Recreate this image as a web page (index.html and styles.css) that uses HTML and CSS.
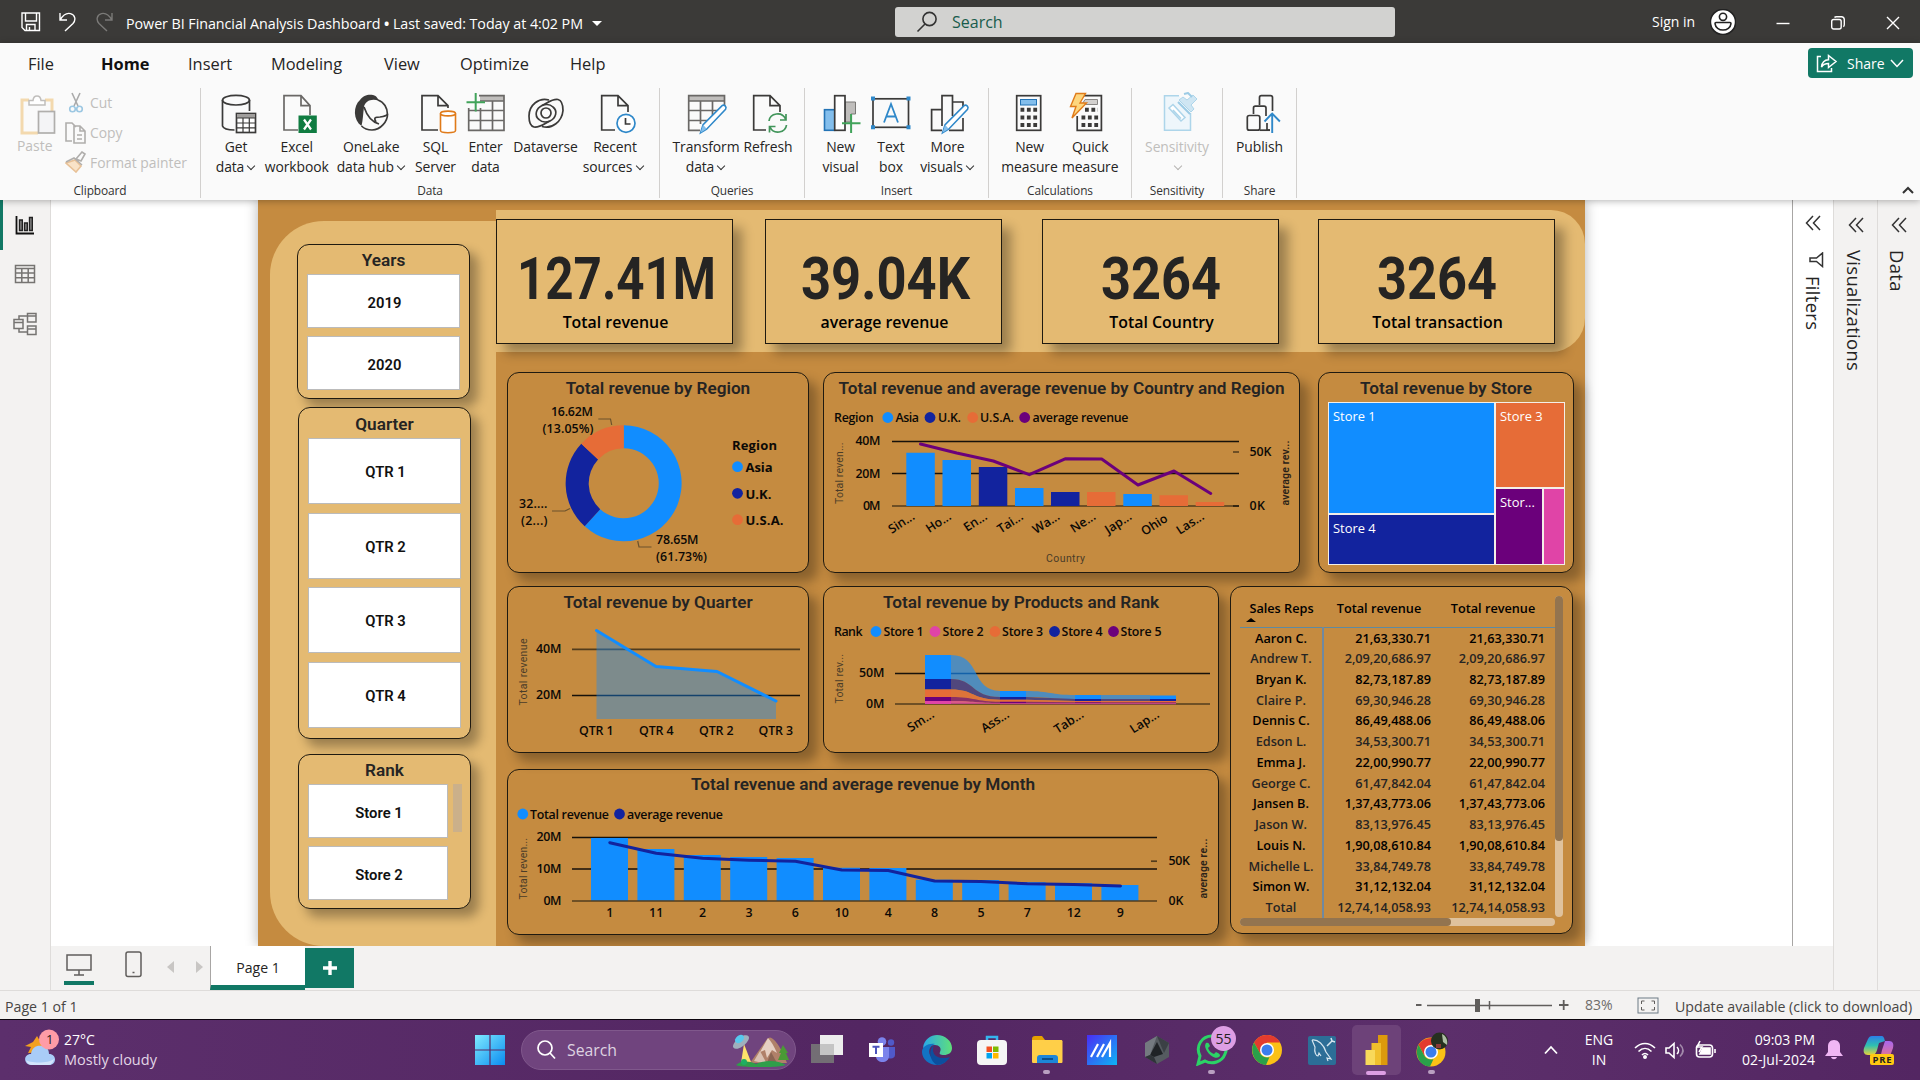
FILE: index.html
```html
<!DOCTYPE html>
<html lang="en">
<head>
<meta charset="utf-8">
<title>Power BI Financial Analysis Dashboard</title>
<link rel="stylesheet" href="styles.css">
</head>
<body>
<header class="titlebar">
  <div class="quick">
    <svg class="q-save" width="20" height="20" viewBox="0 0 20 20"><path d="M1 1h17.500v17.500H4L1 15.500zM4.500 1v8h11V1M5.500 18.500v-6h8.500v6M8.500 18v-3" /></svg>
    <svg class="q-undo" width="18" height="20" viewBox="0 0 18 20"><path d="M1 1v7h7M1.200 7.800C4 3 8 .8 11.500 1.600c5 1.400 5.500 6.500 2.500 9.900L6 19"/></svg>
    <svg class="q-redo" width="18" height="20" viewBox="0 0 18 20"><path d="M17 1v7h-7M16.800 7.800C14 3 10 .8 6.500 1.600c-5 1.400-5.500 6.500-2.500 9.900L12 19"/></svg>
  </div>
  <div class="doc-title">Power BI Financial Analysis Dashboard <b>•</b> Last saved: Today at 4:02 PM</div>
  <i class="caret-down"></i>
  <div class="top-search">
    <svg width="22" height="22" viewBox="0 0 22 22"><circle cx="13.500" cy="8" r="6.600"/><path d="M9 13L1.500 20.500"/></svg>
    <span>Search</span>
  </div>
  <span class="signin">Sign in</span>
  <svg class="avatar" width="26" height="26" viewBox="0 0 26 26"><circle cx="13" cy="13" r="12.600" fill="#fff"/><circle cx="13" cy="7.800" r="3.600"/><path d="M6 13.500h14c.8 0 1 .6 1 1.200-.4 3.800-4 6.300-8 6.300s-7.600-2.500-8-6.300c0-.6.200-1.200 1-1.200z"/></svg>
  <div class="win-ctl">
    <svg width="14" height="14" viewBox="0 0 14 14"><path d="M.5 7.500h13"/></svg>
    <svg width="14" height="14" viewBox="0 0 14 14"><rect x=".7" y="3.500" width="9.500" height="9.500" rx="2"/><path d="M3.500 1.500C4 .8 4.500.7 5.500.7h5a3 3 0 0 1 2.800 2.800v5c0 1-.2 1.800-1 2.200"/></svg>
    <svg width="14" height="14" viewBox="0 0 14 14"><path d="M1 1l12 12M13 1L1 13"/></svg>
  </div>
</header>

<section class="ribbon">
  <nav class="menu">
    <a class="m1">File</a><a class="m2">Home</a><a class="m3">Insert</a><a class="m4">Modeling</a><a class="m5">View</a><a class="m6">Optimize</a><a class="m7">Help</a>
    <button class="share"><svg width="22" height="20" viewBox="0 0 22 20"><path d="M5 3.500H1.500v15h14V15M5.500 14c.5-4.500 3-7 7-7.200V2.500L20 8.500l-7.500 6V10.500C9.500 10.500 7 11.500 5.500 14z"/></svg><span>Share</span><svg width="14" height="9" viewBox="0 0 14 9"><path d="M1 1l6 6.500L13 1"/></svg></button>
  </nav>
  <div class="groups">
    <div class="group g-clip">
      <div class="clip">
        <div class="paste">
          <svg width="38" height="40" viewBox="0 0 38 40"><path d="M9 5H2v33h16M25 5h7v12" fill="none" stroke="#f3d9ae" stroke-width="3"/><path d="M9 10V5.500h4c.5-6 7.500-6 8 0h4V10z" fill="#fff" stroke="#c0bebc" stroke-width="1.500"/><rect x="18.500" y="16.500" width="16" height="21.500" fill="#f4f4f6" stroke="#b0aeac" stroke-width="1.700"/></svg>
          <span>Paste</span>
        </div>
        <div class="clip-list">
          <div><svg width="22" height="22" viewBox="0 0 22 22"><path d="M7 1l6 13M15 1L9 14" stroke="#aaa"/><circle cx="7.500" cy="17" r="2.800" stroke="#9cc7e2"/><circle cx="14.500" cy="17" r="2.800" stroke="#9cc7e2"/></svg>Cut</div>
          <div><svg width="22" height="22" viewBox="0 0 22 22"><path d="M7 19H1V1h6l4 4M9 4h6l5 5v12H9zM15 4v5h5M12 13h5M12 17h5" stroke="#b0aeac"/></svg>Copy</div>
          <div><svg width="22" height="22" viewBox="0 0 22 22"><path d="M1 12l9-3 6 6-5 6z" fill="#f9e3c8" stroke="#e8c197"/><path d="M1 11l8-4 8 7M11 8l6-7 3 2-4 7z" stroke="#b0aeac"/></svg>Format painter</div>
        </div>
      </div>
      <div class="g-name">Clipboard</div>
    </div>
    <div class="group g-data">
      <div class="btns">
        <div class="btn w61"><svg width="48" height="44" viewBox="0 0 48 44"><path class="d" d="M37.500 19V8M10.500 8v26c1 3 6 4 12 4"/><ellipse class="d" cx="24" cy="8.200" rx="13.500" ry="4.800"/><rect class="d w" x="24.500" y="21.500" width="19" height="19"/><path d="M25 22h18v4H25z" fill="#a09e9c"/><path class="d t" d="M24.500 26h19M24.500 31h19M24.500 35.800h19M31 26v14.500M37.300 26v14.500"/></svg><span>Get<br>data<i></i></span></div>
        <div class="btn w605"><svg width="48" height="44" viewBox="0 0 48 44"><path class="g" d="M25 38H11V3.700h17l9 10V23M28 3.700v10h9"/><path d="M25.500 23.500h18.300V41H25.500z" fill="#107c41"/><path d="M31 27.500l7 10M38 27.500l-7 10" stroke="#fff" stroke-width="2.200"/></svg><span>Excel<br>workbook</span></div>
        <div class="btn w885"><svg width="48" height="44" viewBox="0 0 48 44"><path class="d" d="M31 8c6 2 9.500 8 9.500 14.500S34 38 25 38c-5 0-8-1.500-10.500-4"/><path d="M14.500 34C6 28 6 14 13 8c3-5 9-6 13-5 4 1 5 4 6 6-7-3-14 0-15 6-1 7-1 13-2.500 19z" fill="#3b3a39"/><path class="d" d="M17 15c3 9 8 15 15 17M29 30c-3-5 0-5 4-5 4-.5 7-1 7.500-3"/></svg><span>OneLake<br>data hub<i></i></span></div>
        <div class="btn w40"><svg width="48" height="44" viewBox="0 0 48 44"><path class="d" d="M26 38H10V3.700h16l10 10V16M26 3.700v10h10"/><path d="M28.500 21.500v17c0 3 15 3 15 0v-17" fill="#fff" stroke="#e07b1a" stroke-width="1.600"/><ellipse cx="36" cy="21.500" rx="7.500" ry="2.400" fill="#fff" stroke="#e07b1a" stroke-width="1.600"/></svg><span>SQL<br>Server</span></div>
        <div class="btn w60"><svg width="48" height="44" viewBox="0 0 48 44"><path d="M18 4h24v5H18z" fill="#c0bebc"/><path class="g" d="M17 3.700h25v34.600H6.700V16M18 9h24M6.700 18.500H42M6.700 28.500H42M18.500 16v22M30.500 9v29"/><path d="M13.700 1v18.500M4.500 10.300h18.500" stroke="#41a35a" stroke-width="2"/></svg><span>Enter<br>data</span></div>
        <div class="btn w60"><svg width="48" height="44" viewBox="0 0 48 44"><path class="d" d="M27 8C17 5 7 13 7 24c0 6 1 10 5 11 6 1 11-4 16-6M20 34.500c10 3 20-5 21-16 0-6-1-10-5-11-6-1-11 4-16 6"/><circle class="d" cx="24" cy="21" r="5"/><path class="d" d="M20 13.500c-6 3-8 10-3 14 3 3 7 3 11 1.500M28 29c6-3 8-10 3-14-3-3-7-3-11-1.500"/></svg><span>Dataverse</span></div>
        <div class="btn w79"><svg width="48" height="44" viewBox="0 0 48 44"><path class="d" d="M24 38H10.700V3.700H27l10 10V20M27 3.700v10h10"/><circle cx="35" cy="31.300" r="9" fill="#fff" stroke="#2f88c9" stroke-width="1.700"/><path class="d" d="M34.500 26v6h5"/></svg><span>Recent<br>sources<i class="sp"></i></span></div>
      </div>
      <div class="g-name">Data</div>
    </div>
    <div class="group g-quer">
      <div class="btns">
        <div class="btn w80"><svg width="48" height="44" viewBox="0 0 48 44"><path d="M7 4h35v5H7z" fill="#c0bebc"/><path class="g" d="M42.500 14V3.700H6.700v34.600H18M6.700 9h36M6.700 18.500H36M6.700 28.500H25M18.500 9v23M30.500 9v14"/><path d="M18.600 40.700l2.500-8 19-19c2-1.500 5 1 3.500 3.500l-19 20z" fill="#fff" stroke="#2f88c9" stroke-width="1.600"/><path d="M18.600 40.700l2.500-8 3.500 4z" fill="#83beec"/></svg><span>Transform<br>data<i></i></span></div>
        <div class="btn w44"><svg width="48" height="44" viewBox="0 0 48 44"><path class="d" d="M22 38H9.700V3.700H26l10 10V20M26 3.700v10h10"/><path d="M25 29c1-8 13-10 16.500-2M42 22v6h-6M42.500 33c-1 8-13 10-16.500 2M25.500 40.500v-6h6" fill="none" stroke="#41955a" stroke-width="1.700"/></svg><span>Refresh</span></div>
      </div>
      <div class="g-name">Queries</div>
    </div>
    <div class="group g-ins">
      <div class="btns">
        <div class="btn w50"><svg width="48" height="44" viewBox="0 0 48 44"><path d="M28 10h10.500v12H34v8h-6z" fill="#c0bebc" stroke="#7a7876"/><rect x="7.500" y="17.700" width="10.300" height="20.600" fill="#83beec" stroke="#2373b5" stroke-width="1.600"/><rect class="d w" x="17.700" y="3.700" width="10.300" height="34.600"/><path d="M34.100 22v19M25 31.300h18.500" stroke="#41a35a" stroke-width="2"/></svg><span>New<br>visual</span></div>
        <div class="btn w51"><svg width="48" height="44" viewBox="0 0 48 44"><rect class="d" x="6" y="6.800" width="35.500" height="28.500"/><path d="M4 4.500h4v4H4zM39.500 4.500h4v4h-4zM4 33.200h4v4H4zM39.500 33.200h4v4h-4z" fill="#2f88c9"/><path d="M17 30.500l7-18.500 7 18.500M19.500 24.500h9.200" fill="none" stroke="#2f88c9" stroke-width="1.800"/></svg><span>Text<br>box</span></div>
        <div class="btn w62"><svg width="48" height="44" viewBox="0 0 48 44"><path class="d" d="M29 10h10v5M18 17.700H7.600v20.600H18M39 26v12.300H25M18 34V3.700h10.500V24"/><path d="M18.600 40.700l2.500-8 19-19c2-1.500 5 1 3.500 3.500l-19 20z" fill="#fff" stroke="#2f88c9" stroke-width="1.600"/><path d="M18.600 40.700l2.500-8 3.500 4z" fill="#83beec"/></svg><span>More<br>visuals<i></i></span></div>
      </div>
      <div class="g-name">Insert</div>
    </div>
    <div class="group g-calc">
      <div class="btns">
        <div class="btn w605"><svg width="48" height="44" viewBox="0 0 48 44"><rect class="d" x="10.700" y="3.700" width="24" height="34.600"/><rect x="14.500" y="7.500" width="16" height="5.500" fill="#83beec" stroke="#2373b5"/><path d="M14.500 17.700h17M14.500 25.500h17M14.500 33h17" stroke="#3b3a39" stroke-width="4" stroke-dasharray="3.800 2.600"/></svg><span>New<br>measure</span></div>
        <div class="btn w61"><svg width="48" height="44" viewBox="0 0 48 44"><path class="d" d="M18 3.700h17.400v34.600H11.200V24"/><path d="M19 7.500h12.500v5H16z" fill="#d2d0ce" stroke="#8a8886"/><path d="M19 17.700h13M15.500 25.500h17M15.500 33h17" stroke="#3b3a39" stroke-width="4" stroke-dasharray="3.800 2.600"/><path d="M10 1.500h9.500L14 11h6.500L6 26l4-11.500H4.500z" fill="#fdd67e" stroke="#e07b1a" stroke-width="1.400"/></svg><span>Quick<br>measure</span></div>
      </div>
      <div class="g-name">Calculations</div>
    </div>
    <div class="group g-sens">
      <div class="btns">
        <div class="btn w91 off"><svg width="48" height="44" viewBox="0 0 48 44"><path d="M26 3.700H11.500v34.600h26V21" fill="#eef6fb" stroke="#add5ea" stroke-width="1.500"/><path d="M16 16l4-3.500 12 13-4 3.500zM20 18l8 8.500" fill="#fff" stroke="#add5ea" stroke-width="1.500"/><path d="M26 8l12 12 3-3-3-4 6-6-4-4-6 5-4-3z" fill="#cfe6f3" stroke="#add5ea"/><path d="M31 2l4-1 4 4M25 10l12 12" fill="none" stroke="#9ccbe5" stroke-width="2"/></svg><span>Sensitivity<br><i></i></span></div>
      </div>
      <div class="g-name">Sensitivity</div>
    </div>
    <div class="group g-share">
      <div class="btns">
        <div class="btn w74"><svg width="48" height="44" viewBox="0 0 48 44"><path class="d" d="M23.500 13V5.500c0-1.200.8-1.800 1.800-1.800h9.200c1.200 0 2 .6 2 1.800V19M17.500 22v-6c0-1.200.8-1.800 1.800-1.800H28c1.200 0 2 .6 2 1.800v8M31 31v7h3"/><rect class="d" x="11.300" y="23.500" width="12.500" height="14.700" rx="2"/><path class="d" d="M24 38.200h10"/><path d="M36.200 41V22M28.500 29.500l7.700-8 7.700 8" fill="none" stroke="#2f88c9" stroke-width="1.900"/></svg><span>Publish</span></div>
      </div>
      <div class="g-name">Share</div>
    </div>
    <svg class="collapse" width="12" height="8" viewBox="0 0 12 8"><path d="M1 7l5-5 5 5"/></svg>
  </div>
</section>

<main class="work">
  <aside class="views">
    <div class="view on"><svg width="20" height="20" viewBox="0 0 20 20"><path d="M1.500 1v17.500H19" stroke="#111" stroke-width="1.800" fill="none"/><path d="M4.500 5h2.800v10.500H4.500zM9.500 8h2.800v7.500H9.500zM14.500 2.500h2.800v13h-2.800z" fill="#888" stroke="#222" stroke-width="1.400"/></svg></div>
    <div class="view"><svg width="22" height="20" viewBox="0 0 22 20"><path d="M1.500 1.500h19v17h-19zM1.500 4.500h19M1.500 9h19M1.500 13.800h19M7.800 4.500v14M14.200 4.500v14" stroke="#767472" stroke-width="1.500" fill="none"/></svg></div>
    <div class="view"><svg width="24" height="24" viewBox="0 0 24 24"><path d="M14.500 1.500h8.500v8.500h-8.500zM14.500 4h8.500M1 7.500h9v9H1zM1 10.500h9M14.500 14h8.500v8.500h-8.500zM14.500 17h8.500M6 7V4h8M6 17v3h8" stroke="#767472" stroke-width="1.500" fill="none"/></svg></div>
  </aside>

  <div class="center">
    <div class="stage">
      <div class="canvas">
        <div class="side">
          <div class="slicer s-years"><h3>Years</h3><div class="opt">2019</div><div class="opt">2020</div></div>
          <div class="slicer s-qtr"><h3>Quarter</h3><div class="opt">QTR 1</div><div class="opt">QTR 2</div><div class="opt">QTR 3</div><div class="opt">QTR 4</div></div>
          <div class="slicer s-rank"><h3>Rank</h3><div class="rank-body"><div class="rank-opts"><div class="opt">Store 1</div><div class="opt">Store 2</div></div><div class="thumb"></div></div></div>
        </div>
        <div class="board">
          <div class="kpis">
            <div class="kpi k1"><svg width="235" height="81" viewBox="497 220 235 81"><text x="517" y="299" textLength="199" lengthAdjust="spacingAndGlyphs">127.41M</text></svg><span>Total revenue</span></div>
            <div class="kpi k2"><svg width="235" height="81" viewBox="766 220 235 81"><text x="801" y="299" textLength="169" lengthAdjust="spacingAndGlyphs">39.04K</text></svg><span>average revenue</span></div>
            <div class="kpi k3"><svg width="235" height="81" viewBox="1043 220 235 81"><text x="1101" y="299" textLength="120" lengthAdjust="spacingAndGlyphs">3264</text></svg><span>Total Country</span></div>
            <div class="kpi k4"><svg width="235" height="81" viewBox="1319 220 235 81"><text x="1377" y="299" textLength="120" lengthAdjust="spacingAndGlyphs">3264</text></svg><span>Total transaction</span></div>
          </div>

          <div class="row row1">
            <div class="card c-region">
              <h3>Total revenue by Region</h3>
              <svg width="300" height="169" viewBox="508 403 300 169">
                <path d="M623.700 425.300A58 58 0 1 1 584.700 526.300L600.200 509.200A35 35 0 1 0 623.700 448.300Z" fill="#118dff"/>
                <path d="M584.700 526.300A58 58 0 0 1 581.300 443.700L598.100 459.400A35 35 0 0 0 600.200 509.200Z" fill="#12239e"/>
                <path d="M581.300 443.700A58 58 0 0 1 623.700 425.300V448.300A35 35 0 0 0 598.100 459.400Z" fill="#e66c37"/>
                <path class="lead" d="M598.300 419h12.200l1.200 6M552 511h13l5-2.500M637.700 541l1.300 6h12.500"/>
                <text class="lb" x="551" y="415.700" textLength="42">16.62M</text>
                <text class="lb" x="542.500" y="432.700" textLength="51">(13.05%)</text>
                <text class="lb" x="519" y="507.500" textLength="28.500">32....</text>
                <text class="lb" x="521" y="524.500" textLength="26.500">(2...)</text>
                <text class="lb" x="656" y="543.700" textLength="42.500">78.65M</text>
                <text class="lb" x="656" y="560.700" textLength="51">(61.73%)</text>
                <text class="lg" x="732" y="450" textLength="45">Region</text>
                <circle cx="737.500" cy="466.700" r="5.400" fill="#118dff"/><text class="lg" x="745.500" y="472" textLength="27">Asia</text>
                <circle cx="737.500" cy="493.300" r="5.400" fill="#12239e"/><text class="lg" x="745.500" y="498.700" textLength="26">U.K.</text>
                <circle cx="737.500" cy="519.700" r="5.400" fill="#e66c37"/><text class="lg" x="745.500" y="525" textLength="38">U.S.A.</text>
              </svg>
            </div>
            <div class="card c-country">
              <h3>Total revenue and average revenue by Country and Region</h3>
              <svg width="475" height="169" viewBox="824 403 475 169">
                <text class="lb" x="834" y="422" textLength="39.500">Region</text>
                <circle cx="887.800" cy="417.500" r="5.400" fill="#118dff"/><text class="lb" x="895.500" y="422" textLength="23.500">Asia</text>
                <circle cx="930" cy="417.500" r="5.400" fill="#12239e"/><text class="lb" x="938" y="422" textLength="23">U.K.</text>
                <circle cx="972.700" cy="417.500" r="5.400" fill="#e66c37"/><text class="lb" x="980" y="422" textLength="34">U.S.A.</text>
                <circle cx="1024.700" cy="417.500" r="5.400" fill="#6b007b"/><text class="lb" x="1032.500" y="422" textLength="96">average revenue</text>
                <path class="grid" d="M892 441.500h347M892 473.500h347"/><path class="axis" d="M892 506h347M1233 452h6"/><path class="grid" d="M1233 506h6"/>
                <path fill="#118dff" d="M906.300 452.700h28.500V506h-28.500zM942.500 460h28.500v46h-28.500zM1015 488h28.500v18H1015zM1123.300 494h28.500v12h-28.500z"/>
                <path fill="#12239e" d="M978.800 467h28.500v39h-28.500zM1051 492h28.500v14H1051z"/>
                <path fill="#e66c37" d="M1087 492h28.500v14H1087zM1159.500 495.300h28.500V506h-28.500zM1195.700 502h28.500v4h-28.500z"/>
                <path class="ln purple" d="M920.500 444L956.700 453L993.300 461L1029.300 474.700L1065.700 458.700L1101.700 459L1138 485L1174 471L1210.700 493.500"/>
                <g class="tick"><text x="855.500" y="445.300" textLength="25">40M</text><text x="855.500" y="477.800" textLength="25">20M</text><text x="863" y="510" textLength="17.500">0M</text><text x="1249.500" y="456" textLength="22">50K</text><text x="1249.500" y="510" textLength="15.500">0K</text></g>
                <g class="rot">
                  <text transform="translate(915.500 518.500) rotate(-33)">Sin...</text><text transform="translate(952 518.500) rotate(-33)">Ho...</text><text transform="translate(988 518.500) rotate(-33)">En...</text><text transform="translate(1024 518.500) rotate(-33)">Tai...</text><text transform="translate(1060.500 518.500) rotate(-33)">Wa...</text><text transform="translate(1096.500 518.500) rotate(-33)">Ne...</text><text transform="translate(1132.500 518.500) rotate(-33)">Jap...</text><text transform="translate(1168.500 520.500) rotate(-33)">Ohio</text><text transform="translate(1205 518.500) rotate(-33)">Las...</text>
                </g>
                <text class="ax" x="1046" y="562" textLength="39">Country</text>
                <text class="ax" transform="translate(842.500 504) rotate(-90)" textLength="61.500">Total reven...</text>
                <text class="ax bold" transform="translate(1288.500 505.500) rotate(-90)" textLength="65">average rev...</text>
              </svg>
            </div>
            <div class="card c-store">
              <h3>Total revenue by Store</h3>
              <div class="tree">
                <div class="t1">Store 1</div><div class="t3">Store 3</div><div class="t4">Store 4</div><div class="t5">Stor...</div><div class="t2"></div>
              </div>
            </div>
          </div>

          <div class="row row2">
            <div class="stack">
              <div class="row">
                <div class="card c-quarter">
                  <h3>Total revenue by Quarter</h3>
                  <svg width="300" height="135" viewBox="508 617 300 135">
                    <path class="axis" d="M572 649.300h228"/><path class="grid" d="M572 695.500h228"/>
                    <path d="M596.500 630.500L656 666.500L717 671.500L776 701V719H596.500Z" fill="#118dff" fill-opacity=".4"/>
                    <path class="ln blue" d="M596.500 630.500L656 666.500L717 671.500L776 701"/>
                    <g class="tick"><text x="536" y="653" textLength="25.500">40M</text><text x="536" y="699" textLength="25.500">20M</text><text x="579" y="735" textLength="34.500">QTR 1</text><text x="639" y="735" textLength="34.500">QTR 4</text><text x="699" y="735" textLength="34.500">QTR 2</text><text x="758.500" y="735" textLength="34.500">QTR 3</text></g>
                    <text class="ax" transform="translate(526.500 705.500) rotate(-90)" textLength="67">Total revenue</text>
                  </svg>
                </div>
                <div class="card c-prod">
                  <h3>Total revenue by Products and Rank</h3>
                  <svg width="394" height="135" viewBox="824 617 394 135">
                    <text class="lb" x="834" y="636" textLength="28.500">Rank</text>
                    <circle cx="876" cy="631.500" r="5.400" fill="#118dff"/><text class="lb" x="883.500" y="636" textLength="40">Store 1</text>
                    <circle cx="935" cy="631.500" r="5.400" fill="#e044a7"/><text class="lb" x="942.500" y="636" textLength="41">Store 2</text>
                    <circle cx="995" cy="631.500" r="5.400" fill="#e66c37"/><text class="lb" x="1002" y="636" textLength="41">Store 3</text>
                    <circle cx="1054.500" cy="631.500" r="5.400" fill="#12239e"/><text class="lb" x="1061.500" y="636" textLength="41">Store 4</text>
                    <circle cx="1113.500" cy="631.500" r="5.400" fill="#6b007b"/><text class="lb" x="1120.500" y="636" textLength="41">Store 5</text>
                    <path class="grid" d="M895 673.500h315"/><path class="axis" d="M895 704h315"/>
                    <g fill="#118dff"><path d="M925 655h26v24h-26zM1000 691h26v6h-26zM1075 695h26v4h-26zM1150 695.500h26v3.500h-26z"/><path opacity=".65" d="M951 655C981 655 971 690.500 1000 691V697C971 697 975 679 951 679ZM1026 691C1051 691 1050 695 1075 695V699C1050 699 1051 697 1026 697ZM1101 695H1150V699H1101Z"/></g>
                    <g fill="#12239e"><path d="M925 679h26v10.500h-26zM1000 697h26v2.700h-26zM1075 699h26v2h-26zM1150 699h26v2h-26z"/><path opacity=".65" d="M951 679C975 679 971 697 1000 697V699.700C971 699.700 975 689.500 951 689.500ZM1026 697L1075 699V701L1026 699.700ZM1101 699H1150V701H1101Z"/></g>
                    <g fill="#e66c37"><path d="M925 689.500h26v7.500h-26zM1000 699.700h26v2h-26zM1075 701h26v1.300h-26zM1150 701h26v1.500h-26z"/><path opacity=".75" d="M951 689.500C975 689.500 971 699.700 1000 699.700V701.700C975 701.700 975 697 951 697ZM1026 699.700L1075 701V702.300L1026 701.700ZM1101 701H1150V702.500H1101Z"/></g>
                    <g fill="#6b007b"><path d="M925 697h26v4h-26zM1000 701.700h26v1.500h-26zM1075 702.300h26v1h-26zM1150 702.500h26v.8h-26z"/><path opacity=".65" d="M951 697C975 697 975 701.700 1000 701.700V703.200C975 703.200 975 701 951 701ZM1026 701.700L1075 702.300V703.300L1026 703.200ZM1101 702.300H1150V703.300H1101Z"/></g>
                    <path fill="#e044a7" d="M925 701h26v3h-26z"/><path fill="#e044a7" opacity=".7" d="M951 701C975 701 975 703 1000 703V704H951ZM1000 703.100h176v1.100h-176z"/>
                    <g class="tick"><text x="859" y="677.300" textLength="25.500">50M</text><text x="866" y="708" textLength="18.500">0M</text></g>
                    <g class="rot"><text transform="translate(935 716.500) rotate(-33)">Sm...</text><text transform="translate(1010 716.500) rotate(-33)">Ass...</text><text transform="translate(1084.500 716.500) rotate(-33)">Tab...</text><text transform="translate(1160 716.500) rotate(-33)">Lap...</text></g>
                    <text class="ax" transform="translate(842.500 703.500) rotate(-90)" textLength="49.500">Total rev...</text>
                  </svg>
                </div>
              </div>
              <div class="card c-month">
                <h3>Total revenue and average revenue by Month</h3>
                <svg width="710" height="134" viewBox="508 800 710 134">
                  <circle cx="522.800" cy="814" r="5.400" fill="#118dff"/><text class="lb" x="530" y="819" textLength="79">Total revenue</text>
                  <circle cx="619.500" cy="814" r="5.400" fill="#12239e"/><text class="lb" x="627" y="819" textLength="96">average revenue</text>
                  <path class="grid" d="M572 837.500h585M572 869h585"/><path class="axis" d="M1151 861.200h6"/>
                  <path fill="#118dff" d="M591 838h37v63h-37zM637.400 849h37v52h-37zM683.800 855h37v46h-37zM730.200 857h37v44h-37zM776.600 858h37v43h-37zM823 867.700h37V901h-37zM869.400 868h37v33h-37zM915.800 879.700h37V901h-37zM962.200 880h37v21h-37zM1008.600 882.300h37V901h-37zM1055 883.300h37V901h-37zM1101.400 885h37v16h-37z"/>
                  <path class="axis" d="M572 901h585"/>
                  <path class="ln navy" d="M609.800 842.700L656.200 853.300L702.600 858.300L749 860.300L795.400 861.300L841.800 870L888.200 870.500L934.600 881L981 881.500L1027.400 883.700L1073.800 884.500L1120.500 886"/>
                  <g class="tick"><text x="536.500" y="841" textLength="25">20M</text><text x="536.500" y="873" textLength="25">10M</text><text x="543.500" y="905" textLength="18">0M</text><text x="1168.500" y="865" textLength="21.500">50K</text><text x="1168.500" y="905" textLength="15">0K</text></g>
                  <g class="tick mid"><text x="609.800" y="917">1</text><text x="656.200" y="917">11</text><text x="702.600" y="917">2</text><text x="749" y="917">3</text><text x="795.400" y="917">6</text><text x="841.800" y="917">10</text><text x="888.200" y="917">4</text><text x="934.600" y="917">8</text><text x="981" y="917">5</text><text x="1027.400" y="917">7</text><text x="1073.800" y="917">12</text><text x="1120.200" y="917">9</text></g>
                  <text class="ax" transform="translate(526.500 899.500) rotate(-90)" textLength="61.500">Total reven...</text>
                  <text class="ax bold" transform="translate(1206.500 898.500) rotate(-90)" textLength="60">average re...</text>
                </svg>
              </div>
            </div>
            <div class="card c-table">
              <div class="scroll-x">
              <div class="tbl-wrap">
                <table>
                  <thead><tr><th><span class="sort">Sales Reps</span></th><th>Total revenue</th><th>Total revenue</th></tr></thead>
                  <tbody>
                    <tr><td>Aaron C.</td><td>21,63,330.71</td><td>21,63,330.71</td></tr>
                    <tr><td>Andrew T.</td><td>2,09,20,686.97</td><td>2,09,20,686.97</td></tr>
                    <tr><td>Bryan K.</td><td>82,73,187.89</td><td>82,73,187.89</td></tr>
                    <tr><td>Claire P.</td><td>69,30,946.28</td><td>69,30,946.28</td></tr>
                    <tr><td>Dennis C.</td><td>86,49,488.06</td><td>86,49,488.06</td></tr>
                    <tr><td>Edson L.</td><td>34,53,300.71</td><td>34,53,300.71</td></tr>
                    <tr><td>Emma J.</td><td>22,00,990.77</td><td>22,00,990.77</td></tr>
                    <tr><td>George C.</td><td>61,47,842.04</td><td>61,47,842.04</td></tr>
                    <tr><td>Jansen B.</td><td>1,37,43,773.06</td><td>1,37,43,773.06</td></tr>
                    <tr><td>Jason W.</td><td>83,13,976.45</td><td>83,13,976.45</td></tr>
                    <tr><td>Louis N.</td><td>1,90,08,610.84</td><td>1,90,08,610.84</td></tr>
                    <tr><td>Michelle L.</td><td>33,84,749.78</td><td>33,84,749.78</td></tr>
                    <tr><td>Simon W.</td><td>31,12,132.04</td><td>31,12,132.04</td></tr>
                    <tr><td>Total</td><td>12,74,14,058.93</td><td>12,74,14,058.93</td></tr>
                  </tbody>
                </table>
                <div class="bar-h"><i></i></div>
              </div>
              <div class="bar-v"><i></i></div>
              </div>
            </div>
          </div>
        </div>
      </div>
      <div class="pane filters">
        <svg width="16" height="16" viewBox="0 0 16 16"><path d="M8 1L1.500 8 8 15M15 1L8.500 8l6.500 7"/></svg>
        <svg class="funnel" width="16" height="16" viewBox="0 0 16 16"><path d="M14.500 1v13.500L8.500 9.500H2V6h6.500z"/></svg>
        <span>Filters</span>
      </div>
    </div>
    <div class="tabs">
      <div class="dev on"><svg width="26" height="22" viewBox="0 0 26 22"><path d="M1 1h24v15H1zM13 16v5M8 21h10"/></svg></div>
      <div class="dev phone"><svg width="17" height="27" viewBox="0 0 17 27"><rect x="1" y="1" width="15" height="24.500" rx="2"/><path d="M7.500 21.500h2"/></svg></div>
      <i class="arr l"></i><i class="arr r"></i>
      <div class="tab">Page 1</div>
      <div class="add"><svg width="14" height="14" viewBox="0 0 14 14"><path d="M7 0v14M0 7h14"/></svg></div>
    </div>
  </div>

  <div class="pane grey vis"><svg width="16" height="16" viewBox="0 0 16 16"><path d="M8 1L1.500 8 8 15M15 1L8.500 8l6.500 7"/></svg><span>Visualizations</span></div>
  <div class="pane grey dat"><svg width="16" height="16" viewBox="0 0 16 16"><path d="M8 1L1.500 8 8 15M15 1L8.500 8l6.500 7"/></svg><span>Data</span></div>
</main>

<footer class="status">
  <span class="pg">Page 1 of 1</span>
  <svg class="slider" width="156" height="16" viewBox="1414 997 156 16"><path d="M1416 1005h5.500" stroke-width="2"/><path d="M1427 1005.500h125" stroke-width="1.400"/><path d="M1477.500 999v13" stroke-width="5"/><path d="M1489.500 1001v8.500" stroke-width="1.500"/><path d="M1559 1005h9.500M1563.700 1000v10" stroke-width="1.800"/></svg>
  <span class="pct">83%</span>
  <svg class="fit" width="22" height="17" viewBox="0 0 22 17"><rect x="1" y="1" width="20" height="15" stroke="#6c7a86"/><path d="M4.500 7V4h3M14.500 4h3v3M4.500 10v3h3M14.500 13h3v-3"/></svg>
  <span class="upd">Update available (click to download)</span>
</footer>

<div class="taskbar">
  <div class="weather">
    <svg width="38" height="40" viewBox="24 1027 38 40"><path d="M37 1034l3 5 6 1-4 10-14 1 3-6-6-1 8-4z" fill="#f2a01e"/><path d="M32 1063c-9 0-9-11-1-11 1-7 6-9 11-8 5 0 7 4 7 8 8 0 8 11 0 11z" fill="#a9ccf7"/><path d="M26 1058c3 3 22 4 28-1-1 4-3 6-6 6H32c-3 0-5-2-6-5z" fill="#d3e4fc"/><circle cx="49" cy="1037.500" r="10" fill="#ff9ca6"/><text x="46" y="1042">1</text></svg>
    <div><b>27°C</b><br>Mostly cloudy</div>
  </div>
  <div class="ico win"><svg width="30" height="30" viewBox="0 0 30 30"><defs><linearGradient id="w" x1="0" y1="0" x2="1" y2="1"><stop offset="0" stop-color="#7feaff"/><stop offset="1" stop-color="#0a8cf0"/></linearGradient></defs><path d="M0 0h14.400v14.400H0zM15.600 0H30v14.400H15.600zM0 15.600h14.400V30H0zM15.600 15.600H30V30H15.600z" fill="url(#w)"/></svg></div>
  <div class="tsearch">
    <svg width="20" height="20" viewBox="0 0 20 20"><circle cx="9" cy="8" r="7"/><path d="M14 13l5 5.500"/></svg><span>Search</span>
    <svg class="art" width="58" height="34" viewBox="0 0 58 34"><path d="M12 11l7 18-10 1z" fill="#ffe26b"/><path d="M18 30L35 6c2-2 4-2 6 0 6 5 10 14 14 24z" fill="#b08069"/><path d="M36 5l-8 14 5-2 2 8 5-8 5 3c-3-7-6-12-9-15z" fill="#e6cfc2"/><path d="M22 28l6-10 7 13z" fill="#d9c0b2"/><path d="M35 30l4-11 6 11z" fill="#8b6553"/><path d="M4 32c5-5 15-4 20-1 8-4 22-4 30 1-8 3-45 3-50 0z" fill="#2f9e4a"/><path d="M51 12l5 8-2 0 3 7H46l3-7h-2z" fill="#4a9a35"/><ellipse cx="9" cy="9" rx="9.500" ry="4.500" transform="rotate(-38 9 9)" fill="#9fb0bd"/><ellipse cx="7.500" cy="6" rx="5" ry="3.500" transform="rotate(-38 7.500 6)" fill="#57c8ee"/><circle cx="12" cy="29" r="3" fill="#1fae62"/></svg>
  </div>
  <div class="ico i1"><svg width="32" height="30" viewBox="0 0 32 30"><path d="M9 0h23v20H9z" fill="#ececec"/><path d="M0 9h23v19H0z" fill="#777" fill-opacity=".9"/><path d="M9 9h14v11H9z" fill="#c4c4c4"/></svg></div>
  <div class="ico"><svg width="28" height="26" viewBox="0 0 28 26"><circle cx="14" cy="4.500" r="4.300" fill="#7b83eb"/><circle cx="23" cy="5.500" r="3.200" fill="#5059c9"/><path d="M18 10h9v8c0 4-6 5-9 1z" fill="#5059c9"/><path d="M8 10h13v9c0 8-13 8-13 0z" fill="#7b83eb"/><path d="M1 6h14v14H1z" fill="#fff"/><path d="M4.500 9.700h7M8 9.700V17" stroke="#4b53bc" stroke-width="2"/></svg></div>
  <div class="ico"><svg width="32" height="30" viewBox="0 0 32 30"><defs><linearGradient id="e" x1="0" y1="0" x2="1" y2="0"><stop offset="0" stop-color="#2aa7e8"/><stop offset="1" stop-color="#5fe07a"/></linearGradient></defs><path d="M2 13C3 4 10 0 16 0c8 0 15 6 15 13 0 5-4 7-8 7-4 0-5-1-4-3 2-4-1-7-5-7-5 0-9 2-12 3z" fill="url(#e)"/><path d="M1 17C1 11 8 8 14 9c-5 2-7 6-5 11s9 8 17 5c-3 4-7 5-10 5C8 30 1 24 1 17z" fill="#1273c4"/><path d="M13 10c-3 6 0 14 11 13 3 0 5-1 5-1-3 5-8 8-13 8-6-3-10-14-3-20z" fill="#0c4f9e"/></svg></div>
  <div class="ico"><svg width="30" height="30" viewBox="0 0 30 30"><path d="M10 7V2h10v5" fill="none" stroke="#35b4ee" stroke-width="2.500"/><rect x="0" y="5" width="30" height="25" rx="4" fill="#f5f5f5"/><path d="M9.500 11.500H15V17H9.500z" fill="#f25022"/><path d="M16 11.500h5.500V17H16z" fill="#7fba00"/><path d="M9.500 18H15v5.500H9.500z" fill="#00a4ef"/><path d="M16 18h5.500v5.500H16z" fill="#ffb900"/></svg></div>
  <div class="ico run"><svg width="32" height="28" viewBox="0 0 32 28"><path d="M1 3c0-2 1-3 3-3h7l3 4H1z" fill="#e5a100"/><path d="M1 4h29c1 0 1.500.7 1.500 1.500v20c0 1-.5 1.500-1.500 1.500H2.500C1.500 27 1 26.500 1 25.500z" fill="#ffcf48"/><path d="M6 27v-5c0-2 1-3 3-3h15c2 0 3 1 3 3v5z" fill="#1d86d8"/><path d="M11 23h11" stroke="#0b4f8c" stroke-width="2"/></svg></div>
  <div class="ico"><svg width="30" height="30" viewBox="0 0 30 30"><defs><linearGradient id="m" x1="0" y1="0" x2="1" y2="1"><stop offset="0" stop-color="#4a2cf5"/><stop offset="1" stop-color="#0db5f5"/></linearGradient></defs><path d="M0 0h30v30H0z" fill="url(#m)"/><path d="M4 22l7-13M10 22l7-13M15 22l8-14v14" fill="none" stroke="#fff" stroke-width="2.200"/></svg></div>
  <div class="ico"><svg width="28" height="28" viewBox="0 0 28 28"><path d="M14 0l12 7v14l-12 7-12-7V7z" fill="#555b60"/><path d="M14 0l12 7-5 10z" fill="#3b4045"/><path d="M14 6l6 12-9 3-4-2z" fill="#1f2326"/><path d="M14 0L2 7v14l5-2z" fill="#747a80"/><path d="M2 21l5-2 4 2 3 7z" fill="#2f3438"/></svg></div>
  <div class="ico run wa"><svg width="32" height="32" viewBox="0 0 32 32"><path d="M2 30l2-8C-1 12 6 2 16 2s17 9 13 18c-3 8-13 11-20 7z" fill="#5b2f69" stroke="#2bd366" stroke-width="3"/><path d="M10 9c-4 5 7 18 13 14 2-2 1-3-3-5l-2 2c-3-1-5-3-6-6l2-2c-1-3-2-4-4-3z" fill="#2bd366"/></svg><b>55</b></div>
  <div class="ico"><svg width="30" height="30" viewBox="0 0 30 30"><circle cx="15" cy="15" r="15" fill="#fbc116"/><path d="M2 7.500A15 15 0 0 1 28 7.500H15L8.500 19z" fill="#e33b2e"/><path d="M2 7.500L8.500 19c3 4 7 4 9 3L14 30C3 29-3 17 2 7.500z" fill="#2aa14a"/><circle cx="15" cy="15" r="7" fill="#fff"/><circle cx="15" cy="15" r="5.500" fill="#3b7ded"/></svg></div>
  <div class="ico"><svg width="28" height="29" viewBox="0 0 28 29"><rect width="28" height="29" rx="2" fill="#2c6e97"/><path d="M4 4c6-1 12 5 14 12l5 7-4-1 1 3M4 4l3 7c-1 5 1 9 3 9l1-3 2 3" fill="none" stroke="#d6e6ef" stroke-width="1.200"/><path d="M23 2l1 3 3 1M24 5l-5 5" fill="none" stroke="#d6e6ef" stroke-width="1.500"/></svg></div>
  <div class="ico pbi"><svg width="24" height="30" viewBox="0 0 24 30"><path d="M13 0h9.500v30H13z" fill="#dc9a0c"/><path d="M6.500 8h9.500v22H6.500z" fill="#f0bf2c"/><path d="M.5 15H10v15H.5z" fill="#f8d95a"/></svg></div>
  <div class="ico run"><svg width="32" height="36" viewBox="0 0 32 36"><circle cx="15" cy="20" r="14.500" fill="#fbc116"/><path d="M2.500 12.700a15 15 0 0 1 25 0H15L8.500 24z" fill="#e33b2e"/><path d="M2.500 12.700L8.500 24c3 4 7 4 9 3L14 34.500C3 34-2 22 2.500 12.700z" fill="#2aa14a"/><circle cx="15" cy="20" r="7" fill="#fff"/><circle cx="15" cy="20" r="5.500" fill="#3b7ded"/><circle cx="23.500" cy="9" r="8.500" fill="#26301f"/><path d="M26 2c4 2 6 6 5 11l-4-3z" fill="#aebfa5"/><path d="M20 12h5v4h-5z" fill="#8b3a36"/></svg></div>

  <svg class="up" width="16" height="10" viewBox="0 0 16 10"><path d="M2 8.500l6-6.500 6 6.500"/></svg>
  <div class="lang">ENG<br>IN</div>
  <svg class="sys" width="84" height="20" viewBox="1634 1039 84 20"><path d="M1636 1047c6-6 14-6 20 0M1639.500 1050.500c4-4 9-4 13 0M1643 1054c2-2 4-2 6 0" /><circle cx="1646" cy="1056" r="1.200" fill="#fff"/><path d="M1667 1047h3l5-4.500v14l-5-4.500h-3zM1678 1046c2 2 2 5 0 7"/><path d="M1681 1043.500c4 4 4 8 0 12" opacity=".45"/><rect x="1697.500" y="1044" width="16" height="12" rx="3"/><path d="M1704 1047h7v6h-10z" fill="#fff"/><path d="M1716 1048v4M1701 1040l-3 6h5l-3 5"/></svg>
  <div class="clock">09:03 PM<br>02-Jul-2024</div>
  <svg class="bell" width="18" height="20" viewBox="0 0 18 20"><path d="M9 0c4 0 6 3 6 6v6l3 4H0l3-4V6c0-3 2-6 6-6zM6 17h6c-1 3-5 3-6 0z" fill="#f0b6f4"/></svg>
  <svg class="cop" width="32" height="30" viewBox="0 0 32 30"><defs><linearGradient id="c1" x1="0" y1="0" x2="0" y2="1"><stop offset="0" stop-color="#2b7fe8"/><stop offset=".5" stop-color="#2fc0b0"/><stop offset="1" stop-color="#e6d23b"/></linearGradient><linearGradient id="c2" x1="0" y1="0" x2="0" y2="1"><stop offset="0" stop-color="#a866ef"/><stop offset="1" stop-color="#f0787c"/></linearGradient></defs><path d="M9 1h9c3 0 3 2 4 5l-6 2c-2 6-2 12-7 12H5c-4 0-5-3-4-7L5 4c1-2 2-3 4-3z" fill="url(#c1)"/><path d="M22 6h4c4 0 5 3 4 7l-3 8c-1 3-2 4-5 4h-8c3-2 4-5 5-10z" fill="url(#c2)"/><rect x="7" y="19" width="24" height="11" rx="2" fill="#ffc812"/><text x="9.500" y="28" textLength="19">PRE</text></svg>
</div>
</body>
</html>
```
FILE: styles.css
```css
* { box-sizing: border-box; }
body { margin: 0; width: 1920px; height: 1080px; overflow: hidden; font-family: "Open Sans", "Noto Sans", sans-serif; color: #252423; background: #fff; display: flex; flex-direction: column; }
svg { display: block; flex: none; }
h3 { margin: 0; font: 600 17.200px/31px Roboto, sans-serif; height: 30px; color: #252423; text-align: center; white-space: nowrap; }

/* title bar */
.titlebar { height: 43px; background: #3b3a38; color: #fff; display: flex; align-items: center; flex: none; white-space: nowrap; }
.quick { display: flex; padding-left: 21px; width: 126px; }
.quick svg { fill: none; stroke: #fff; stroke-width: 1.400; margin-right: 18px; }
.quick .q-redo { stroke: #7b7a78; }
.doc-title { font-size: 14.300px; padding-top: 4px; width: 466px; letter-spacing: -.05px; flex: none; }
.doc-title b { font-size: 14px; }
.caret-down { border: 5.500px solid transparent; border-top-color: #fff; border-bottom: 0; margin-top: 3px; width: 0; }
.top-search { margin-left: 293px; width: 500px; height: 30px; background: #d2d2d0; border-radius: 3px; display: flex; align-items: center; color: #185c4c; font-size: 16px; padding-left: 21px; }
.top-search svg { fill: none; stroke: #333; stroke-width: 1.600; margin-right: 14px; }
.signin { font-size: 14px; margin-left: 257px; width: 58px; }
.avatar { stroke: #222; stroke-width: 1.600; fill: none; }
.win-ctl { display: flex; gap: 41px; margin-left: 40px; padding-top: 3px; }
.win-ctl svg { fill: none; stroke: #fff; stroke-width: 1.400; }

/* ribbon */
.ribbon { height: 157px; background: #fafafa; flex: none; position: relative; z-index: 2; box-shadow: 0 1px 7px rgba(0,0,0,.3); }
.menu { height: 40px; display: flex; align-items: center; font-size: 16.400px; color: #252423; }
.menu a { white-space: nowrap; }
.m1 { margin-left: 28px; width: 73px; } .m2 { width: 87px; font-weight: 700; color: #111; } .m3 { width: 83px; } .m4 { width: 113px; } .m5 { width: 76px; } .m6 { width: 110px; } .m7 { width: 60px; }
.share { margin-left: auto; margin-right: 7px; width: 105px; height: 30px; background: #117865; border: 0; border-radius: 4px; color: #fff; display: flex; align-items: center; padding: 0 0 0 8px; font: 500 14px "Open Sans", sans-serif; }
.share span { margin: 0 5px 0 9px; }
.share svg { fill: none; stroke: #fff; stroke-width: 1.500; }
.groups { display: flex; height: 110px; margin-top: 5px; font-size: 13.900px; }
.group { border-right: 1px solid #d2d0ce; display: flex; flex-direction: column; }
.g-clip { width: 201px; } .g-data { width: 459px; } .g-quer { width: 145px; } .g-ins { width: 184px; } .g-calc { width: 143px; } .g-sens { width: 91px; } .g-share { width: 74px; }
.g-name { font-size: 11.900px; line-height: 16px; text-align: center; padding-top: 4px; color: #333; letter-spacing: -.1px; }
.btns { height: 92px; padding-top: 4px; display: flex; justify-content: center; }
.g-data .btns { justify-content: flex-start; padding-left: 4.500px; } .g-quer .btns { justify-content: flex-start; padding-left: 6px; } .g-ins .btns { justify-content: flex-start; padding-left: 10.500px; }
.btn { display: flex; flex-direction: column; align-items: center; text-align: center; line-height: 20px; white-space: nowrap; flex: none; letter-spacing: -.1px; }
.btn span { margin: 0 -20px; padding-top: 1px; }
.btn.off { color: #c0bebc; }
.btn i { display: inline-block; width: 6px; height: 6px; border: solid #333; border-width: 0 1.800px 1.800px 0; transform: rotate(45deg); margin: 0 2px 3px 4px; }
.btn.off i { border-color: #b5b3b1; }
.btn i.sp { margin-left: 5px; margin-right: 4px; }
.w61 { width: 61px; } .w605 { width: 60.500px; } .w885 { width: 88.500px; } .w40 { width: 40px; } .w60 { width: 60px; } .w79 { width: 79px; } .w80 { width: 80px; } .w44 { width: 44px; } .w50 { width: 50px; } .w51 { width: 51px; } .w62 { width: 62px; } .w91 { width: 90px; } .w74 { width: 73px; }
.d, .g { fill: none; stroke: #3b3a39; stroke-width: 1.700; }
.g { stroke: #6a6866; } .t { stroke-width: 1.200; } .w { fill: #fff; }
.clip { display: flex; height: 92px; color: #c0bebc; }
.paste { width: 65px; padding: 7px 0 0 20px; }
.paste span { display: block; margin: 1px -10px 0 -3px; line-height: 20px; }
.clip-list { display: flex; flex-direction: column; }
.clip-list div { display: flex; align-items: center; gap: 3px; height: 29.700px; white-space: nowrap; }
.clip-list svg { fill: none; stroke-width: 1.600; }
.collapse { margin: 98px 6px 0 auto; fill: none; stroke: #333; stroke-width: 2; }

/* work area */
.work { height: 790px; display: flex; flex: none; }
.views { width: 51px; background: #f3f2f1; border-right: 1px solid #dedcda; }
.view { height: 50px; display: flex; align-items: center; justify-content: center; padding-bottom: 2px; }
.view.on { border-left: 3px solid #117865; padding: 0 3px 0 0; }
.center { width: 1782px; display: flex; flex-direction: column; }
.stage { height: 746px; display: flex; background: #fff; overflow: hidden; }
.canvas { margin-left: 207px; width: 1327px; height: 746px; background: #c58b40; display: flex; flex: none; box-shadow: 0 0 12px rgba(0,0,0,.3); }
.side { margin: 21px 0 0 12px; width: 226px; height: 725px; background: #e4ba72; border-radius: 54px 0 0 54px; padding: 23px 0 0 27px; flex: none; }
.slicer { width: 173px; border: 1px solid #1f1a10; border-radius: 12px; background: #e4ba72; box-shadow: 8px 8px 11px rgba(0,0,0,.32); padding: 1px 9px 0; display: flex; flex-direction: column; }
.slicer h3 { line-height: 28px; height: 28px; font-size: 17.200px; }
.opt { background: #fff; border: 1px solid #bbb; display: flex; align-items: center; justify-content: center; font: 600 14.800px Roboto, sans-serif; color: #111; padding: 4px 0 0 2px; flex: none; }
.s-years { height: 155px; } .s-years .opt { height: 54px; margin-bottom: 8px; }
.s-qtr { height: 332px; margin: 8px 0 0 1px; } .s-qtr .opt { height: 66px; margin-bottom: 8.500px; padding-top: 2px; } .s-qtr h3 { line-height: 30px; height: 29px; }
.s-rank { height: 155px; margin: 15px 0 0 1px; } .s-rank .opt { height: 54px; margin-bottom: 8px; }
.rank-body { display: flex; justify-content: space-between; } .rank-opts { width: 140px; }
.thumb { width: 9px; height: 48px; background: #cbb08a; margin-right: -1px; }

.board { width: 1089px; }
.kpis { margin-top: 10px; height: 142px; background: #e4ba72; border-radius: 0 34px 34px 0; padding-top: 9px; display: flex; }
.kpi { width: 237px; height: 125px; border: 1px solid #1f1a10; background: #e4ba72; box-shadow: 9px 9px 11px rgba(0,0,0,.32); flex: none; margin-right: 40px; }
.k1 { margin-right: 32px; } .k3 { margin-right: 39px; }
.kpi svg { overflow: visible; }
.kpi text { font: 700 59px Roboto, sans-serif; fill: #252423; }
.kpi span { display: block; text-align: center; font-weight: 650; font-size: 15.900px; line-height: 24px; margin-top: 9px; margin-left: 2px; color: #000; }
.row { display: flex; }
.row1 { margin: 20px 0 0 11px; height: 201px; }
.row2 { margin: 13px 0 0 11px; gap: 11px; }
.card { border: 1px solid #1f1a10; border-radius: 12px; background: #c58b40; box-shadow: 9px 9px 12px rgba(0,0,0,.3); flex: none; }
.c-region { width: 302px; margin-right: 14px; } .c-country { width: 477px; margin-right: 18px; } .c-store { width: 256px; }
.c-quarter { width: 302px; height: 167px; margin-right: 14px; } .c-prod { width: 396px; height: 167px; }
.c-month { width: 712px; height: 166px; margin-top: 16px; }
.c-month h3 { line-height: 29px; }
.c-table { width: 343px; height: 348px; padding: 9px 0 0 9px; }

/* chart marks */
.lb, .lg, .tick, .rot { font: 650 12.400px "Open Sans", sans-serif; fill: #0c0906; }
.lg { font-size: 13px; font-weight: 700; }
.mid { text-anchor: middle; }
.rot { text-anchor: end; }
.ax { font: 400 10.500px Roboto, sans-serif; fill: #4a3c28; }
.ax.bold { font-weight: 600; fill: #2a2218; }
.grid, .axis, .lead, .ln { fill: none; stroke: #17110a; stroke-width: 1.300; }
.axis { stroke: #523c1c; stroke-width: 1.700; }
.lead { stroke: #6d532d; stroke-width: 1.200; }
.ln { stroke-width: 3; stroke-linejoin: round; stroke-linecap: round; }
.purple { stroke: #6b007b; } .blue { stroke: #118dff; } .navy { stroke: #12239e; }

.tree { margin: -1px 0 0 9px; width: 237px; height: 163px; background: #f4efe8; padding: 1px; display: grid; grid-template-columns: 165px 46px 20px; grid-template-rows: 84px 24px 49px; gap: 2px; color: #fff; font-size: 12.900px; line-height: 17px; }
.tree div { padding: 5px 0 0 4px; white-space: nowrap; }
.t1 { background: #118dff; grid-area: 1/1/3/2; } .t3 { background: #e66c37; grid-area: 1/2/2/4; } .t4 { background: #12239e; grid-area: 3/1/4/2; } .t5 { background: #6b007b; grid-area: 2/2/4/3; } .t2 { background: #e044a7; grid-area: 2/3/4/4; }

.scroll-x { display: flex; }
.tbl-wrap { width: 315px; }
table { border-collapse: collapse; table-layout: fixed; width: 315px; font-size: 12.700px; font-weight: 650; color: #252423; }
th { height: 31px; padding: 0; font-weight: 650; color: #000; border-bottom: 1px solid #5f8aa0; line-height: 24px; vertical-align: top; white-space: nowrap; }
th:first-child { width: 83px; }
th:nth-child(2) { width: 108px; padding-left: 4px; } th:nth-child(3) { padding-right: 13px; padding-left: 13px; }
.sort { position: relative; }
.sort::after { content: ""; position: absolute; left: -3px; top: 19px; border: 5px solid transparent; border-bottom: 4px solid #000; border-top: 0; }
td { height: 20.750px; line-height: 20px; padding: 0; text-align: right; white-space: nowrap; }
tbody tr:nth-child(odd) { color: #000; }
td:first-child { text-align: center; border-right: 2px solid #7089a0; }
td:nth-child(3) { padding-right: 10px; }
.bar-h { height: 8px; background: #dfc29d; border-radius: 4px; } .bar-h i { display: block; width: 211px; height: 8px; border-radius: 4px; background: #93744f; }
.bar-v { width: 8px; height: 321px; background: #dfc29d; border-radius: 4px; } .bar-v i { display: block; height: 245px; border-radius: 4px; background: #93744f; }

/* side panes */
.pane { flex: none; display: flex; flex-direction: column; align-items: center; padding-top: 17px; }
.pane svg { fill: none; stroke: #333; stroke-width: 1.500; }
.pane span { writing-mode: vertical-rl; font-size: 18.500px; line-height: 24px; margin: 17px 4px 0 0; font-weight: 500; letter-spacing: .3px; color: #252423; }
.filters { width: 41px; margin-left: 207px; border-left: 1px solid #a8a6a4; padding-top: 15px; }
.filters .funnel { margin: 21px 0 0 6px; }
.filters span { margin: 8px 0 0; }
.grey { background: #f3f2f1; border-left: 1px solid #dedcda; }
.vis { width: 44px; } .dat { width: 43px; }

.tabs { height: 44px; background: #f3f2f1; display: flex; position: relative; z-index: 1; }
.dev { width: 30px; margin-left: 13px; padding-top: 8px; display: flex; flex-direction: column; align-items: center; height: 39px; }
.dev.on { border-bottom: 4px solid #117865; }
.dev svg { fill: none; stroke: #605e5c; stroke-width: 1.500; }
.phone { margin-left: 24px; padding-top: 5px; }
.arr { border: 6px solid transparent; height: 0; align-self: flex-start; margin-top: 15px; }
.arr.l { border-right: 7px solid #c8c6c4; border-left: 0; margin-left: 19px; } .arr.r { border-left: 7px solid #c8c6c4; border-right: 0; margin-left: 22px; }
.tab { margin-left: 7px; width: 95px; background: #fff; border-bottom: 5px solid #117865; border-left: 1px solid #a8a6a4; text-align: center; font-size: 14.100px; line-height: 44px; height: 44px; }
.add { width: 49px; height: 40px; margin-top: 2px; background: #117865; display: flex; align-items: center; justify-content: center; }
.add svg { stroke: #fff; stroke-width: 3.400; }

.status { height: 29px; background: #f3f2f1; border-top: 1px solid #dedcda; display: flex; align-items: center; font-size: 14.200px; color: #484644; flex: none; padding: 2px 0 0 5px; white-space: nowrap; }
.pg { width: 1409px; }
.slider, .fit { stroke: #605e5c; fill: none; margin-top: -3px; }
.fit { margin-top: -2px; }
.pct { margin-left: 15px; width: 52px; color: #6e6c6a; margin-top: -3px; font-size: 14px; }
.upd { margin-left: 16px; }

/* taskbar */
.taskbar { height: 61px; border-top: 1px solid #0c060e; background: linear-gradient(90deg, #5c2f6c, #532662 45%, #5c2f6b 75%, #532662); display: flex; align-items: center; color: #fff; font-size: 14px; white-space: nowrap; }
.weather { width: 462px; display: flex; padding-left: 24px; gap: 2px; line-height: 20px; color: #e2d6e6; font-size: 14.500px; }
.weather svg { margin-top: -2px; }
.weather b { font-weight: 400; color: #fff; font-size: 14px; } .weather text { font-size: 13px; fill: #222; }
.weather div { margin-top: -1px; }
.ico { width: 55px; height: 50px; display: flex; align-items: center; justify-content: center; flex: none; position: relative; }
.win { margin-right: 4px; }
.i1 { margin-left: 3px; }
.run::after { content: ""; position: absolute; bottom: 1px; left: 24px; width: 7px; height: 4px; border-radius: 2px; background: #b99fc1; }
.wa b { position: absolute; left: 27px; top: 1px; width: 25px; height: 25px; border-radius: 50%; background: #dd9ee4; color: #222; font: 400 14px/25px "Open Sans", sans-serif; text-align: center; }
.pbi { width: 49px; margin: 0 3px; background: #6d4279; border-radius: 5px; }
.pbi::after { content: ""; position: absolute; bottom: 0; left: 14px; width: 20px; height: 4px; border-radius: 2px; background: #dd9ee4; }
.tsearch { width: 275px; height: 40px; border-radius: 20px; background: #70447e; border: 1px solid #80588c; display: flex; align-items: center; padding-left: 14px; font-size: 15.800px; color: #ded3e1; }
.tsearch svg { fill: none; stroke: #fff; stroke-width: 1.700; margin-right: 11px; }
.tsearch .art { margin: 0 5px 0 auto; stroke: none; }
.up { margin-left: 84px; fill: none; stroke: #fff; stroke-width: 1.800; }
.lang { width: 64px; margin-left: 8px; text-align: center; line-height: 20px; }
.sys { margin-left: 2px; fill: none; stroke: #fff; stroke-width: 1.600; }
.clock { width: 98px; text-align: right; line-height: 20px; }
.bell { margin-left: 10px; } .cop { margin-left: 20px; }
.cop text { font: 700 9.500px "Open Sans", sans-serif; fill: #222; }
```
